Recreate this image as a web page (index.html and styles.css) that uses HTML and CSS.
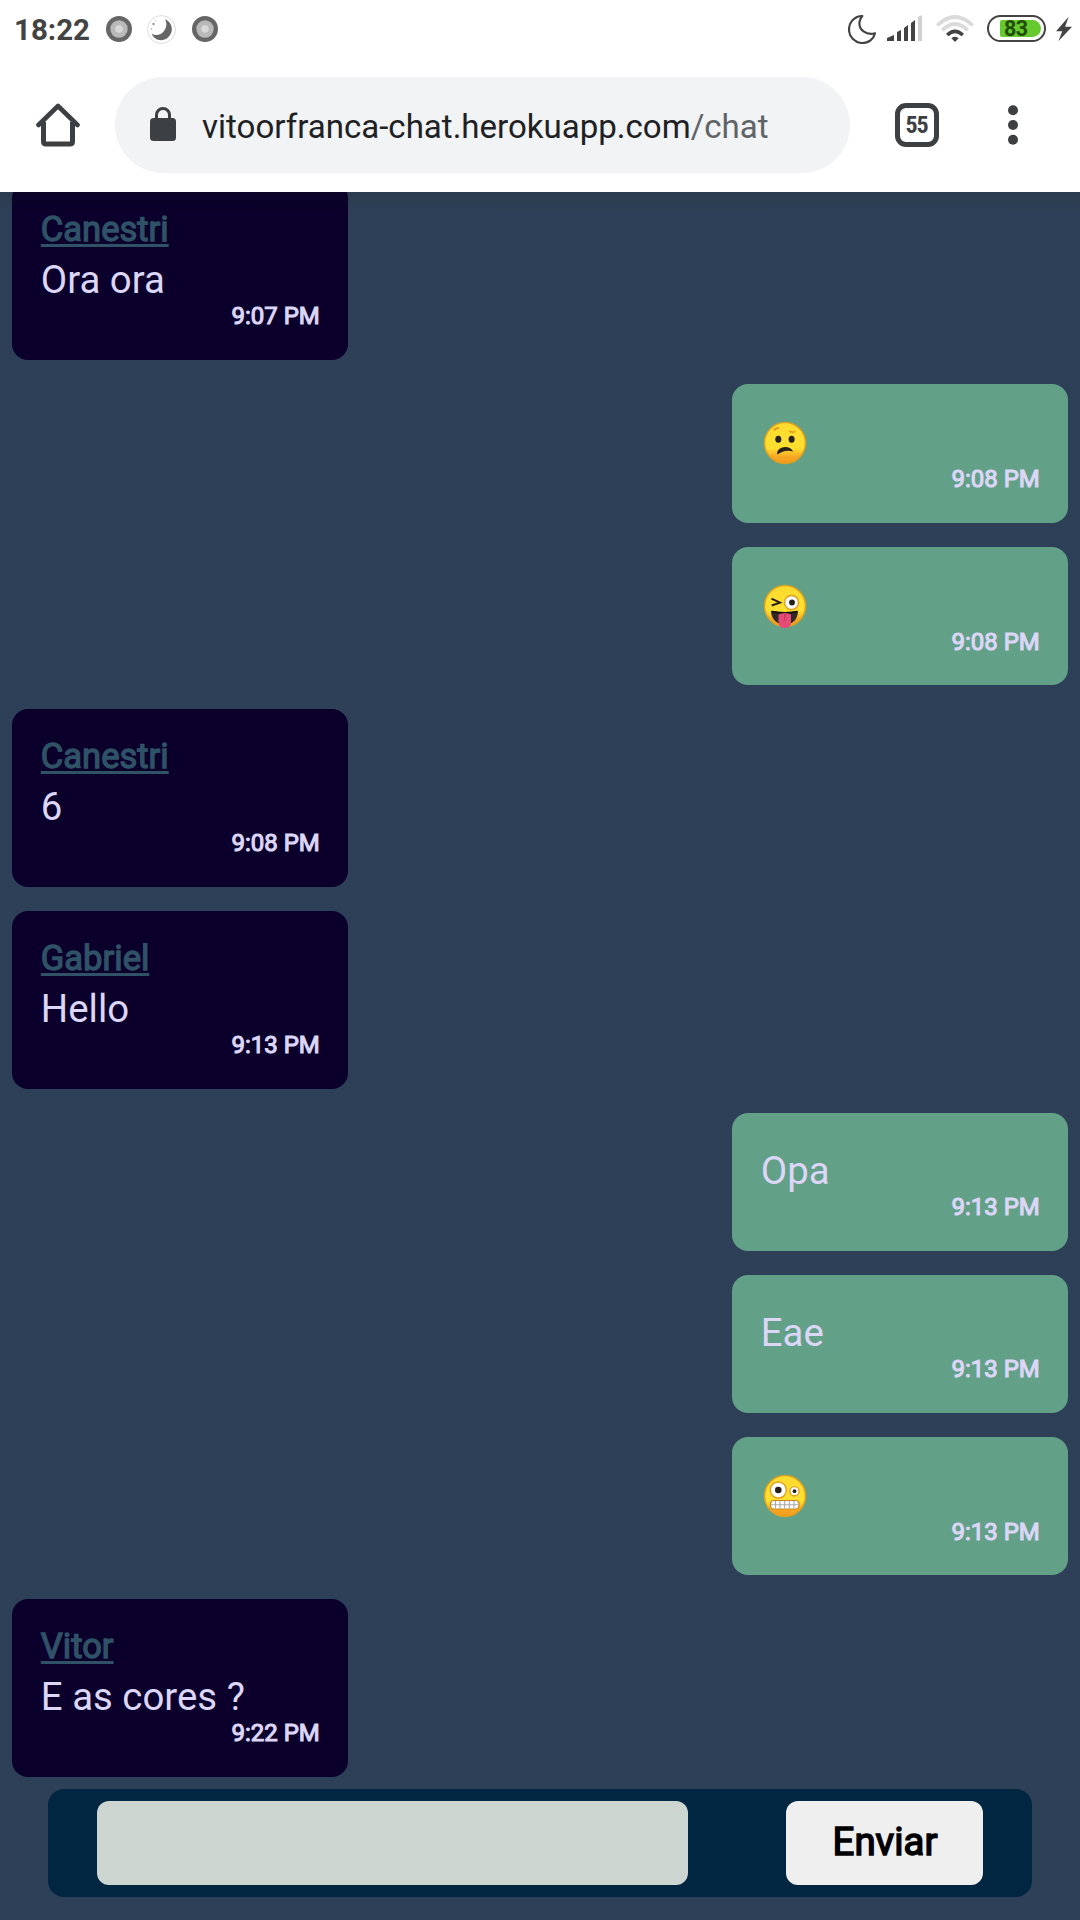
FILE: index.html
```html
<!DOCTYPE html>
<html lang="pt-BR">
<head>
<meta charset="utf-8">
<title>Chat</title>
<link rel="stylesheet" href="styles.css">
</head>
<body>
<div class="screen">
  <header class="status">
    <span class="clock">18:22</span>
    <div class="notices">
      <svg width="26" height="26" viewBox="0 0 26 26"><circle cx="13" cy="13" r="13" fill="#666"/><circle cx="13" cy="13" r="8.7" fill="#b9b9b9"/><circle cx="13" cy="13" r="3.8" fill="#d8d8d8"/></svg>
      <svg width="29" height="29" viewBox="0 0 29 29"><circle cx="14.5" cy="14.5" r="14" fill="#fff" stroke="#dcdcdc"/><path d="M18 4C26 8 27 17 21 22.500C15 27.500 7 25 4.500 18.500C9 21.500 14 20 17 16C20 12 20 8 18 4Z" fill="#666"/><circle cx="6.500" cy="9" r="1.100" fill="#777"/><circle cx="4.500" cy="14" r=".7" fill="#999"/><circle cx="9" cy="5.500" r=".5" fill="#aaa"/></svg>
      <svg width="26" height="26" viewBox="0 0 26 26"><circle cx="13" cy="13" r="13" fill="#666"/><circle cx="13" cy="13" r="8.7" fill="#b9b9b9"/><circle cx="13" cy="13" r="3.8" fill="#d8d8d8"/></svg>
    </div>
    <svg class="moon" width="28" height="29" viewBox="0 0 28 29"><path d="M14.300 1C6.500 1.200 1 7.200 1 14.400C1 22 7 28 14.500 28C20.500 28 25.700 24 27 18.200C19 20.500 10.500 15.500 11.500 7C11.800 4.800 12.800 2.600 14.300 1Z" fill="none" stroke="#434343" stroke-width="2.200" stroke-linejoin="round"/></svg>
    <svg class="signal" width="35" height="26" viewBox="0 0 35 26"><g fill="#434343"><path d="M0 26v-3l7-3v6zM10 26v-9l4-2v11zM17 26V13l4-3v16zM24 26V8l4-3v21z"/></g><path d="M31 26V2l4-2v26z" fill="#d0d0d0"/></svg>
    <svg class="wifi" width="38" height="27" viewBox="0 0 38 27"><g fill="none" stroke-width="3.600"><path d="M1.200 10.500Q19-6.500 36.800 10.500" stroke="#dadada"/><path d="M6.200 15.300Q19 2.700 31.800 15.300" stroke="#dadada"/><path d="M11.200 20Q19 12.700 26.800 20" stroke="#434343"/></g><path d="M15.400 23.200Q19 20.300 22.600 23.200L19 27z" fill="#434343"/></svg>
    <div class="battery"><span class="charge">83</span></div>
    <svg class="bolt" width="16" height="26" viewBox="0 0 17 26"><path d="M13.500 0L0 15.500h6.700L2.500 26L17 10.500H9.700z" fill="#434343"/></svg>
  </header>

  <nav class="toolbar">
    <svg class="home" width="44" height="44" viewBox="0 0 44 44"><path d="M7.500 19v19.500q0 2.500 2.500 2.500h24q2.500 0 2.500-2.500V19" fill="none" stroke="#3c4043" stroke-width="5"/><path d="M2.500 22L22 3L41.500 22" fill="none" stroke="#3c4043" stroke-width="4.600" stroke-linecap="round" stroke-linejoin="round"/></svg>
    <div class="address">
      <svg class="lock" width="26" height="34" viewBox="0 0 26 34"><rect y="11" width="26" height="23" rx="3.500" fill="#3c4043"/><path d="M6.500 12V8a6.500 6.500 0 0 1 13 0v4" fill="none" stroke="#3c4043" stroke-width="3"/></svg>
      <span class="url">vitoorfranca-chat.herokuapp.com<span class="path">/chat</span></span>
    </div>
    <div class="tabs">55</div>
    <svg class="menu" width="10" height="40" viewBox="0 0 10 40"><g fill="#3c4043"><circle cx="5" cy="5.300" r="5"/><circle cx="5" cy="20" r="5"/><circle cx="5" cy="34.700" r="5"/></g></svg>
  </nav>

  <main class="chat">
    <div class="messages">
      <article class="message"><h2 class="author">Canestri</h2><p class="text">Ora ora</p><time class="time">9:07 PM</time></article>

      <article class="message own reaction first"><p class="text"><svg class="emoji" viewBox="0 0 44 44" role="img" aria-label="confuso"><defs><linearGradient id="face" x1="0" y1="0" x2="0" y2="1"><stop offset="0" stop-color="#fddb2e"/><stop offset=".62" stop-color="#fedf30"/><stop offset=".84" stop-color="#f6a723"/><stop offset="1" stop-color="#f39a1e"/></linearGradient></defs><circle cx="22" cy="22" r="20.500" fill="url(#face)" stroke="#dda01f" stroke-width="1.500"/><ellipse cx="15.300" cy="18.300" rx="3" ry="3.500" fill="#25201b"/><ellipse cx="28.600" cy="18.300" rx="3" ry="3.500" fill="#25201b"/><path d="M11 9.500Q12.500 6.800 16 7M26.700 10Q29 12 32.200 10.500" fill="none" stroke="#e29a1b" stroke-width="1.800"/><path d="M14.200 33.500C13 26 26 22.500 30.200 30.500Q22 28 14.200 33.500Z" fill="#25201b"/></svg></p><time class="time">9:08 PM</time></article>

      <article class="message own reaction"><p class="text"><svg class="emoji" viewBox="0 0 44 44" role="img" aria-label="piscando com a língua de fora"><circle cx="22" cy="22" r="20.500" fill="url(#face)" stroke="#dda01f" stroke-width="1.500"/><path d="M8.500 14.700L17 18.700L8.700 21.500" fill="none" stroke="#25201b" stroke-width="1.900"/><circle cx="28.500" cy="18.500" r="7" fill="#fff" stroke="#dda01f" stroke-width="1.400"/><circle cx="29" cy="18.500" r="2.900" fill="#25201b"/><path d="M8 26.700Q22 29.500 35 26.700C35 35.500 29.500 40.500 22 40.500S8 35.500 8 26.700Z" fill="#302a25"/><path d="M9 26.700Q22 29.500 34 26.700V28.700Q22 31 9 28.700Z" fill="#171310"/><path d="M15.500 30.500Q22 27.500 28 30.500V38Q28 44 21.800 44T15.500 38Z" fill="#e44b76"/><path d="M21.800 29.500V37" stroke="#bd315b" stroke-width="1"/></svg></p><time class="time">9:08 PM</time></article>

      <article class="message"><h2 class="author">Canestri</h2><p class="text">6</p><time class="time">9:08 PM</time></article>
      <article class="message"><h2 class="author">Gabriel</h2><p class="text">Hello</p><time class="time">9:13 PM</time></article>
      <article class="message own"><p class="text">Opa</p><time class="time">9:13 PM</time></article>
      <article class="message own"><p class="text">Eae</p><time class="time">9:13 PM</time></article>

      <article class="message own reaction"><p class="text"><svg class="emoji" viewBox="0 0 44 44" role="img" aria-label="careta"><circle cx="22" cy="22" r="20.500" fill="url(#face)" stroke="#dda01f" stroke-width="1.500"/><circle cx="15.300" cy="16" r="8" fill="#fff" stroke="#dda01f" stroke-width="1.400"/><circle cx="15.300" cy="16" r="3.300" fill="#25201b"/><circle cx="31.500" cy="17.200" r="4.600" fill="#fff" stroke="#dda01f" stroke-width="1.400"/><circle cx="31.500" cy="17.200" r="1.900" fill="#25201b"/><rect x="7.500" y="26.500" width="28.500" height="8.500" rx="3.500" fill="#fff" stroke="#c9871b" stroke-width="1.200"/><path d="M8 30.800H35.500M12.500 27v7.500M17 27v7.500M21.700 27v7.500M26.300 27v7.500M31 27v7.500" stroke="#a9a9a9" stroke-width="1.100"/></svg></p><time class="time">9:13 PM</time></article>

      <article class="message"><h2 class="author">Vitor</h2><p class="text">E as cores ?</p><time class="time">9:22 PM</time></article>
    </div>
    <form class="composer">
      <input class="field" type="text" aria-label="Mensagem">
      <button class="send" type="button">Enviar</button>
    </form>
  </main>
</div>
</body>
</html>
```
FILE: styles.css
```css
* { box-sizing: border-box; }
body { margin: 0; font-family: Roboto, "Liberation Sans", sans-serif; }
h2, p { margin: 0; font-weight: 400; }
svg { display: block; flex: none; }

.screen { width: 1080px; height: 1920px; display: flex; flex-direction: column; background: #fff; overflow: hidden; }

.status { height: 58px; padding: 0 8px 0 14px; display: flex; align-items: center; }
.clock { width: 91.5px; padding-top: 2px; font-size: 29.5px; font-weight: 700; line-height: 34px; color: #434343; }
.notices { display: flex; align-items: center; gap: 15.5px; }
.moon { margin-left: auto; }
.signal { margin-left: 11px; margin-top: -2px; }
.wifi { margin-left: 14px; margin-top: -2px; }
.battery { width: 59px; height: 27px; margin: -2px 0 0 13px; padding: 3px 3px 3px 11px; display: flex; border: 2px solid #434343; border-radius: 14px; }
.charge { width: 41px; height: 17px; background: #66c92d; border-radius: 2px 9px 9px 2px; padding-left: 4px; font-size: 21.5px; font-weight: 700; line-height: 17px; letter-spacing: -.5px; color: #234d08; }
.bolt { margin-left: 10px; }

.toolbar { height: 134px; padding: 0 62px 0 36px; display: flex; align-items: center; }
.address { width: 735px; height: 96px; margin-left: 35px; padding-left: 35px; display: flex; align-items: center; background: #f1f3f4; border-radius: 48px; }
.lock { margin-top: -3px; }
.url { margin: 3px 0 0 26px; font-size: 33.060px; line-height: 40px; color: #202124; white-space: nowrap; }
.path { color: #5f6368; }
.tabs { width: 44px; height: 44px; margin-left: 45px; display: flex; align-items: center; justify-content: center; border: 5px solid #3c4043; border-radius: 11px; font-family: "Roboto Condensed", Roboto, sans-serif; font-size: 24px; font-weight: 700; letter-spacing: -1.2px; line-height: 34px; text-indent: -1.2px; color: #3c4043; }
.menu { margin-left: auto; }

.chat { position: relative; height: 1728px; display: flex; flex-direction: column; background: #2e4057; }
.chat::before { content: ""; position: absolute; z-index: 1; top: 0; left: 0; right: 0; height: 20px; background: linear-gradient(rgba(24, 32, 20, .14), rgba(24, 32, 20, 0)); }
.messages { height: 1597px; padding: 0 12px 12px; display: flex; flex-direction: column; justify-content: flex-end; gap: 24px; overflow: hidden; }
.message { flex: none; width: 336px; height: 178px; padding: 29px 28.200px 0 28.800px; background: #0a002b; border-radius: 16px; color: #dcd6f7; }
.own { align-self: flex-end; height: 138px; background: #63a088; }
.first { height: 139px; }
.author { height: 40px; font-size: 34.560px; line-height: 36px; color: #2f5266; -webkit-text-stroke: 1.300px #2f5266; text-decoration: underline; text-decoration-thickness: 3px; text-underline-offset: 3px; }
.text { height: 57px; font-size: 38.400px; line-height: 57px; white-space: nowrap; }
.time { display: block; font-size: 24px; line-height: 17px; text-align: right; -webkit-text-stroke: 1.100px #dcd6f7; }
.reaction .time { line-height: 18px; }
.emoji { width: 44px; height: 44px; position: relative; top: 8px; left: 2px; }

.composer { width: 984px; height: 108px; margin: 0 auto; padding: 12px 49px; display: flex; justify-content: space-between; background: #002642; border-radius: 16px; }
.field { width: 591px; height: 84px; border: 0; border-radius: 12px; background: #cdd5d1; }
.send { width: 197px; height: 84px; padding: 0 0 4px 1px; border: 0; border-radius: 12px; background: #efefef; color: #000; font-family: inherit; font-size: 38.400px; -webkit-text-stroke: 1.500px #000; }
```
